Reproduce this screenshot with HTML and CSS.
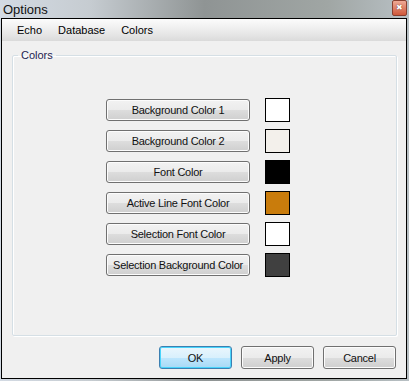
FILE: index.html
```html
<!DOCTYPE html>
<html lang="en">
<head>
  <meta charset="UTF-8">
  <title>Options</title>
  <link rel="stylesheet" href="styles.css">
</head>
<body>
  <div class="window">
    <div class="titlebar">
      <span class="title">Options</span>
      <span class="close">&#x2716;</span>
    </div>

    <div class="frame">
      <!-- menu -->
      <div class="menubar">
        <span class="menu-item">Echo</span>
        <span class="menu-item">Database</span>
        <span class="menu-item">Colors</span>
      </div>

      <!-- colors group -->
      <fieldset class="group">
        <legend>Colors</legend>
        <div class="color-list">
          <div class="color-row">
            <button class="btn color-btn">Background Color 1</button>
            <span class="swatch" style="background:#ffffff"></span>
          </div>
          <div class="color-row">
            <button class="btn color-btn">Background Color 2</button>
            <span class="swatch" style="background:#f3f0eb"></span>
          </div>
          <div class="color-row">
            <button class="btn color-btn">Font Color</button>
            <span class="swatch" style="background:#000000"></span>
          </div>
          <div class="color-row">
            <button class="btn color-btn">Active Line Font Color</button>
            <span class="swatch" style="background:#c97c0c"></span>
          </div>
          <div class="color-row">
            <button class="btn color-btn">Selection Font Color</button>
            <span class="swatch" style="background:#ffffff"></span>
          </div>
          <div class="color-row">
            <button class="btn color-btn">Selection Background Color</button>
            <span class="swatch" style="background:#404040"></span>
          </div>
        </div>
      </fieldset>

      <div class="actions">
        <button class="btn action default">OK</button>
        <button class="btn action">Apply</button>
        <button class="btn action">Cancel</button>
      </div>
    </div>
  </div>
</body>
</html>
```

FILE: styles.css
```css
body {
  margin: 0;
  padding: 0;
  font-family: 'Liberation Sans', Arial, sans-serif;
  font-size: 11px;
  color: #000;
  background: #e4e6e8;
}

.window {
  width: 409px;
  height: 381px;
  display: flex;
  flex-direction: column;
  background: linear-gradient(90deg, #d3dae3 0%, #c6ccd1 22%, #8f9494 50%, #a0a6a4 80%, #b8c0c4 100%);
}

.titlebar {
  height: 18px;
  display: flex;
  align-items: center;
  justify-content: space-between;
  padding: 0 2px 0 3px;
}

.title {
  font-size: 13px;
  color: #111;
  padding-top: 1px;
}

.close {
  width: 13px;
  height: 14px;
  margin-top: -2px;
  background: linear-gradient(#eeaa96, #d0583a);
  border: 1px solid #8a4030;
  border-radius: 2px;
  color: #fff;
  font-size: 8px;
  line-height: 14px;
  text-align: center;
  text-shadow: 0 0 1px #400;
}

.frame {
  flex: 1;
  margin: 0 2px 2px 1px;
  border: 1px solid #000;
  background: #f0f0f0;
  display: flex;
  flex-direction: column;
}

.menubar {
  height: 22px;
  display: flex;
  align-items: center;
  padding-left: 9px;
  background: linear-gradient(#fcfcfc, #e6e6e6 70%, #dadada);
}

.menu-item {
  font-size: 11px;
  padding: 0 6px;
  margin-right: 4px;
}

.group {
  margin: 8px 9px 0 10px;
  height: 287px;
  border: 1px solid #d5dfe5;
  box-shadow: inset 1px 1px 0 #fff, 1px 1px 0 #fff;
  border-radius: 2px;
  padding: 0;
  box-sizing: border-box;
}

.group legend {
  font-size: 11px;
  color: #1e1e50;
  padding: 0 3px;
  margin-left: 5px;
}

.color-list {
  display: flex;
  flex-direction: column;
  gap: 7px;
  padding: 37px 0 0 93px;
}

.color-row {
  display: flex;
  align-items: center;
  gap: 15px;
}

.btn {
  font-family: 'Liberation Sans', Arial, sans-serif;
  font-size: 11px;
  letter-spacing: -0.25px;
  color: #111;
  white-space: nowrap;
  border: 1px solid #707070;
  border-radius: 3px;
  background: linear-gradient(#f2f2f2 0%, #ebebeb 50%, #dddddd 51%, #cfcfcf 100%);
  box-shadow: inset 0 0 0 1px #fcfcfc;
  padding: 0;
}

.color-btn {
  width: 144px;
  height: 22px;
}

.swatch {
  width: 23px;
  height: 22px;
  border: 1px solid #000;
}

.actions {
  display: flex;
  justify-content: flex-end;
  gap: 9px;
  padding: 10px 10px 0 0;
}

.action {
  width: 73px;
  height: 23px;
}

.action.default {
  border-color: #3c7fb1;
  background: linear-gradient(#eaf6fd 0%, #d9f0fc 50%, #bee6fd 51%, #a7d9f5 100%);
  box-shadow: inset 0 0 0 1px #48d4fb;
}
```
